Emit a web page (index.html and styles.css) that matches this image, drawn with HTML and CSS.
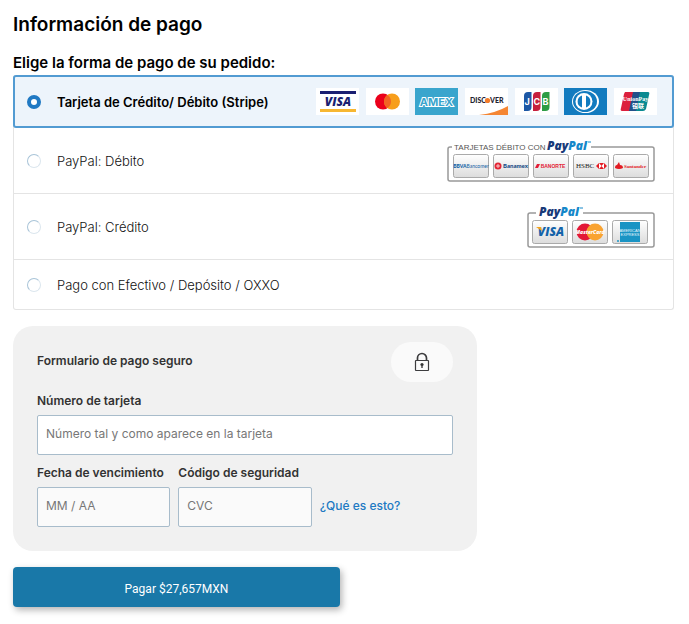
FILE: index.html
```html
<!DOCTYPE html>
<html lang="es">
<head>
<meta charset="utf-8">
<meta name="viewport" content="width=device-width, initial-scale=1">
<title>Información de pago</title>
<link rel="stylesheet" href="styles.css">
</head>
<body>
<main class="checkout">
  <h1 class="title">Información de pago</h1>
  <form>
    <fieldset class="methods">
      <legend class="subtitle">Elige la forma de pago de su pedido:</legend>
      <div class="list">
        <label class="method method-selected">
          <input class="radio" type="radio" name="method" checked>
          <span class="name">Tarjeta de Crédito/ Débito (Stripe)</span>
          <span class="cards">
            <svg class="card" viewBox="0 0 43 27" role="img" aria-label="Visa">
              <rect width="43" height="27" fill="#fff"/>
              <rect x="4" y="3" width="36" height="3" fill="#1a1f71"/>
              <rect x="4" y="21" width="36" height="3" fill="#f7b731"/>
              <text x="22" y="18" text-anchor="middle" class="logo-italic" font-size="12" fill="#1a1f71">VISA</text>
            </svg>
            <svg class="card" viewBox="0 0 43 27" role="img" aria-label="Mastercard">
              <rect width="43" height="27" fill="#fff"/>
              <circle cx="17" cy="13.500" r="8" fill="#eb001b"/>
              <circle cx="26" cy="13.500" r="8" fill="#f79e1b"/>
              <path d="M21.500 6.900a8 8 0 0 1 0 13.200a8 8 0 0 1 0-13.200" fill="#f26322"/>
            </svg>
            <svg class="card" viewBox="0 0 43 27" role="img" aria-label="American Express">
              <rect width="43" height="27" fill="#39a5cd"/>
              <text x="21.500" y="18" text-anchor="middle" class="logo amex" font-size="11">AMEX</text>
            </svg>
            <svg class="card" viewBox="0 0 43 27" role="img" aria-label="Discover">
              <rect width="43" height="27" fill="#fff"/>
              <path d="M14 27Q31 25 43 18V27Z" fill="#f58633"/>
              <text x="5" y="15" class="logo-lato" font-size="7" fill="#1f2230">DISC</text>
              <circle cx="22.500" cy="12.500" r="2.600" fill="#f47b29"/>
              <text x="25" y="15" class="logo-lato" font-size="7" fill="#1f2230">VER</text>
            </svg>
            <svg class="card" viewBox="0 0 43 27" role="img" aria-label="JCB">
              <rect width="43" height="27" fill="#fff"/>
              <path d="M9 23V8q0-4 4-4h3.500v15q0 4-4 4z" fill="#1c57a5"/>
              <path d="M18 23V8q0-4 4-4h3.500v15q0 4-4 4z" fill="#c61f3c"/>
              <path d="M27 23V8q0-4 4-4h3.500v15q0 4-4 4z" fill="#2d9c45"/>
              <text x="9.500" y="17" class="logo" font-size="9" fill="#fff">J</text>
              <text x="18.500" y="17" class="logo" font-size="9" fill="#fff">C</text>
              <text x="27.500" y="17" class="logo" font-size="9" fill="#fff">B</text>
            </svg>
            <svg class="card" viewBox="0 0 43 27" role="img" aria-label="Diners Club">
              <rect width="43" height="27" fill="#127bbf"/>
              <ellipse cx="21.500" cy="13.500" rx="13.500" ry="11.500" fill="#fff"/>
              <ellipse cx="21" cy="13.500" rx="12" ry="10.500" fill="#127bbf"/>
              <circle cx="20" cy="13.500" r="8.500" fill="#fff"/>
              <path d="M18 7.500v12a6.300 6.300 0 0 1 0-12M22 7.500v12a6.300 6.300 0 0 0 0-12" fill="#127bbf"/>
            </svg>
            <svg class="card" viewBox="0 0 43 27" role="img" aria-label="UnionPay">
              <rect width="43" height="27" fill="#fff"/>
              <path d="M11 4h10l-4 19H8q-2 0-1-3l3-14z" fill="#dc1f3d"/>
              <path d="M19 4h9l-4 19H15z" fill="#22508a"/>
              <path d="M26 4h8q2 0 1 3l-3 14q-1 2-3 2h-7z" fill="#0a8a91"/>
              <text x="21.500" y="13" text-anchor="middle" class="logo-serif" font-size="6" fill="#fff">UnionPay</text>
              <text x="24" y="20" text-anchor="middle" class="logo-cjk" font-size="6" fill="#fff">银联</text>
            </svg>
          </span>
        </label>

        <label class="method method-tall">
          <input class="radio" type="radio" name="method">
          <span class="name">PayPal: Débito</span>
          <svg class="paypal" width="208" height="44" viewBox="0 0 208 44" role="img" aria-label="Tarjetas débito con PayPal">
            <defs>
              <linearGradient id="tile" x1="0" y1="0" x2="0" y2="1"><stop offset="0" stop-color="#fff"/><stop offset="1" stop-color="#dcdcdc"/></linearGradient>
            </defs>
            <path d="M6 8H4q-2 0-2 2v30q0 2 2 2h202q2 0 2-2V10q0-2-2-2h-61" fill="none" stroke="#999" stroke-width="1.500"/>
            <text x="8" y="11" class="logo-plain" font-size="8" fill="#555">TARJETAS DÉBITO CON</text>
            <text x="101" y="11" class="logo-italic" font-size="12" fill="#183a78">Pay<tspan fill="#1587c9">Pal</tspan></text>
            <path d="M142 3h3" stroke="#1587c9"/>
            <g fill="url(#tile)" stroke="#aaa">
              <rect x="7.500" y="15.500" width="35" height="23" rx="2"/>
              <rect x="47.500" y="15.500" width="35" height="23" rx="2"/>
              <rect x="87.500" y="15.500" width="35" height="23" rx="2"/>
              <rect x="127.500" y="15.500" width="35" height="23" rx="2"/>
              <rect x="167.500" y="15.500" width="35" height="23" rx="2"/>
            </g>
            <text x="25" y="29" text-anchor="middle" class="logo-lato" font-size="5" fill="#1261a5">BBVA<tspan class="thin">Bancomer</tspan></text>
            <circle cx="52" cy="27" r="3.500" fill="#e32636"/>
            <path d="M50 27h4M52 25v4" stroke="#fff" stroke-width=".7"/>
            <text x="57" y="29" class="logo-lato" font-size="6" fill="#174b87">Banamex</text>
            <path d="M89 29l2-4h3l-2 4z" fill="#e31b35"/>
            <text x="107" y="29" text-anchor="middle" class="logo-sans" font-size="5" fill="#e31b35">BANORTE</text>
            <text x="130" y="29" class="logo-plain-serif" font-size="7" fill="#222">HSBC</text>
            <path d="M150 27l3-3h5l3 3-3 3h-5z" fill="#e31b23"/>
            <path d="M153 24l2.500 3-2.500 3zM158 24l-2.500 3 2.500 3z" fill="#fff"/>
            <path d="M169 29q0-3 2-3l2-3 1 3q3 0 3 3-4 2-8 0" fill="#e31b23"/>
            <text x="178" y="29" class="logo-serif" font-size="5" fill="#e31b23">Santander</text>
          </svg>
        </label>

        <label class="method method-tall">
          <input class="radio" type="radio" name="method">
          <span class="name">PayPal: Crédito</span>
          <svg class="paypal" width="128" height="44" viewBox="0 0 128 44" role="img" aria-label="PayPal crédito">
            <path d="M10 8H4q-2 0-2 2v30q0 2 2 2h122q2 0 2-2V10q0-2-2-2H57" fill="none" stroke="#999" stroke-width="1.500"/>
            <text x="13" y="11" class="logo-italic" font-size="12" fill="#183a78">Pay<tspan fill="#1587c9">Pal</tspan></text>
            <path d="M54 3h3" stroke="#1587c9"/>
            <g fill="url(#tile)" stroke="#aaa">
              <rect x="6.500" y="15.500" width="35" height="23" rx="2"/>
              <rect x="46.500" y="15.500" width="35" height="23" rx="2"/>
              <rect x="86.500" y="15.500" width="35" height="23" rx="2"/>
            </g>
            <text x="25" y="31" text-anchor="middle" class="logo-italic" font-size="12" fill="#1463a9">VISA</text>
            <path d="M10 22h5l1 4z" fill="#f2a31b"/>
            <circle cx="59" cy="27" r="8.500" fill="#e31837"/>
            <circle cx="69" cy="27" r="8.500" fill="#f9a331"/>
            <text x="64" y="29" text-anchor="middle" class="logo-italic" font-size="5" fill="#fff">MasterCard</text>
            <rect x="94" y="17" width="20" height="20" fill="#1a94c4"/>
            <text x="104" y="27" text-anchor="middle" class="logo-plain" font-size="4" fill="#e8f8ff">AMERICAN</text>
            <text x="104" y="31" text-anchor="middle" class="logo-plain" font-size="4" fill="#e8f8ff">EXPRESS</text>
            <circle cx="92" cy="36" r="1" fill="#1a94c4"/>
          </svg>
        </label>

        <label class="method method-last">
          <input class="radio" type="radio" name="method">
          <span class="name">Pago con Efectivo / Depósito / OXXO</span>
        </label>
      </div>
    </fieldset>

    <section class="secure">
      <header class="secure-head">
        <h2 class="secure-title">Formulario de pago seguro</h2>
        <span class="badge">
          <svg width="16" height="20" viewBox="0 0 16 20" fill="none" stroke="#3c3c3e" aria-hidden="true">
            <path d="M3.500 8.500V6a4.500 4.500 0 0 1 9 0v2.500" stroke-width="1.700"/>
            <rect x="1.500" y="8.500" width="13" height="10" rx=".5" stroke-width="1.200"/>
            <circle cx="8" cy="12.500" r="1.600" fill="#333" stroke="none"/>
            <path d="M8 13v3" stroke-width="1.400"/>
          </svg>
        </span>
      </header>
      <div class="field">
        <label class="label" for="number">Número de tarjeta</label>
        <input class="input input-number" id="number" type="text" inputmode="numeric" placeholder="Número tal y como aparece en la tarjeta">
      </div>
      <div class="fields">
        <div class="field">
          <label class="label" for="expiry">Fecha de vencimiento</label>
          <input class="input" id="expiry" type="text" placeholder="MM / AA">
        </div>
        <div class="field">
          <label class="label" for="cvc">Código de seguridad</label>
          <input class="input" id="cvc" type="text" placeholder="CVC">
        </div>
        <a class="help" href="#">¿Qué es esto?</a>
      </div>
    </section>

    <button class="pay" type="submit">Pagar $27,657MXN</button>
  </form>
</main>
</body>
</html>
```
FILE: styles.css
```css
* {
  box-sizing: border-box;
}

body {
  margin: 0;
  background: #fff;
  color: #000;
  font-family: Inter, "Open Sans", sans-serif;
}

.checkout {
  padding: 12px 15px 16px 13px;
}

.title {
  margin: 0 0 12px;
  font-size: 19px;
  line-height: 26px;
  font-weight: 600;
}

.methods {
  margin: 0;
  padding: 0;
  border: 0;
  min-width: 0;
}

.subtitle {
  padding: 0;
  font-size: 15px;
  line-height: 25px;
  font-weight: 600;
}

.list {
  border: 1px solid #e4e4e4;
  border-top: 0;
  border-radius: 3px;
}

.method {
  display: flex;
  align-items: center;
  padding: 0 19px 0 13px;
  border-bottom: 1px solid #e4e4e4;
  font-size: 13px;
  line-height: 20px;
  font-weight: 300;
  color: #111;
}

.method-selected {
  min-height: 53px;
  margin: 0 -1px;
  padding: 0 15px 0 12px;
  border: 2px solid #529bd2;
  border-radius: 3px;
  background: #edf4fb;
  color: #000;
}

.method-selected .name {
  font-weight: 600;
}

.method-tall {
  min-height: 66px;
}

.method-last {
  min-height: 49px;
  border-bottom: 0;
}

.radio {
  appearance: none;
  flex: none;
  width: 14px;
  height: 14px;
  margin: 0 16px 0 0;
  border: 1px solid #a9c4d8;
  border-right-color: #dbe6ee;
  border-bottom-color: #dbe6ee;
  border-radius: 50%;
  background: #fff;
}

.radio:checked {
  border: 4px solid #2079c3;
}

.name {
  flex: 1;
}

.cards {
  display: flex;
  justify-content: space-between;
  flex: 0 0 341px;
}

.card {
  display: block;
  width: 43px;
  height: 27px;
}

.paypal {
  flex: none;
  overflow: visible;
}

.logo {
  font-family: Inter, sans-serif;
  font-weight: 700;
}

.amex {
  fill: #39a5cd;
  stroke: #fff;
  stroke-width: 2px;
  paint-order: stroke;
}

.logo-italic {
  font-family: "Open Sans", sans-serif;
  font-weight: 800;
  font-style: italic;
}

.logo-lato {
  font-family: Lato, sans-serif;
  font-weight: 900;
}

.logo-lato .thin {
  font-weight: 400;
}

.logo-plain {
  font-family: "Liberation Sans", sans-serif;
  font-weight: 400;
}

.logo-sans {
  font-family: "Liberation Sans", sans-serif;
  font-weight: 700;
}

.logo-serif {
  font-family: "Liberation Serif", serif;
  font-weight: 700;
}

.logo-plain-serif {
  font-family: "Liberation Serif", serif;
  font-weight: 400;
}

.logo-cjk {
  font-family: "Noto Sans CJK SC", sans-serif;
  font-weight: 700;
}

.secure {
  max-width: 464px;
  margin-top: 16px;
  padding: 16px 24px 24px;
  border-radius: 20px;
  background: #f1f1f1;
}

.secure-head {
  display: flex;
  justify-content: space-between;
  margin-bottom: 8px;
}

.secure-title {
  margin: 8px 0 0;
  font-size: 12px;
  line-height: 22px;
  font-weight: 600;
  color: #333;
}

.badge {
  display: flex;
  align-items: center;
  justify-content: center;
  width: 62px;
  height: 40px;
  border-radius: 20px;
  background: #fafafa;
}

.field {
  flex: 1;
}

.fields {
  display: flex;
  align-items: flex-end;
  gap: 8px;
  margin-top: 7px;
}

.label {
  display: block;
  padding-bottom: 3px;
  font-size: 12px;
  line-height: 22px;
  font-weight: 600;
  white-space: nowrap;
  color: #333;
}

.input {
  display: block;
  width: 100%;
  height: 40px;
  padding: 0 8px 3px;
  border: 1px solid #a8bccb;
  border-radius: 2px;
  background: #fafafa;
  font: 400 12px/20px Inter, sans-serif;
  color: #333;
}

.input-number {
  background: #fff;
}

.input::placeholder {
  color: #777;
  opacity: 1;
}

.help {
  flex: 1;
  font-size: 12px;
  line-height: 38px;
  padding-bottom: 2px;
  font-weight: 500;
  color: #2079c3;
  text-decoration: none;
}

.pay {
  display: block;
  width: 100%;
  max-width: 327px;
  height: 40px;
  margin-top: 16px;
  padding: 3px 16px 0;
  border: 0;
  border-radius: 4px;
  background: #1978a8;
  box-shadow: 2px 3px 7px rgba(0, 0, 0, 0.3);
  color: #fff;
  font: 400 12px/20px Roboto, sans-serif;
}
```
